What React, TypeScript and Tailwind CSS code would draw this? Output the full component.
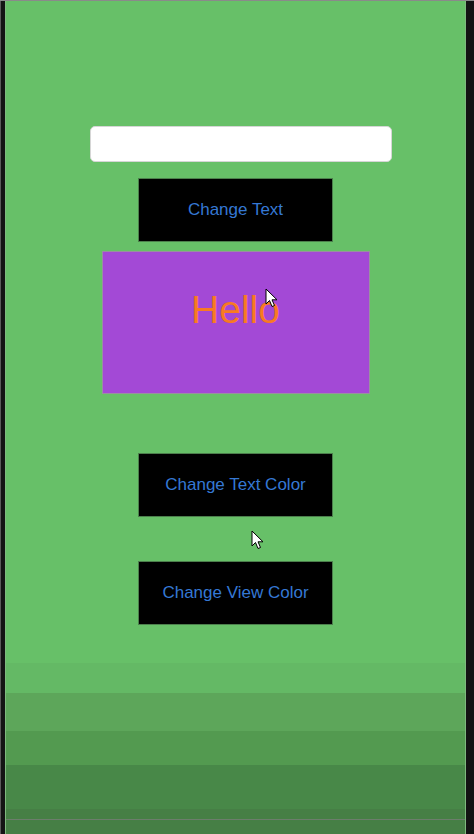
import React from "react";

function Cursor() {
  return (
    <svg width="14" height="20" viewBox="0 0 14 20">
      <path
        d="M1 1 L1 16 L4.5 12.5 L7 18.5 L9.5 17.5 L7 11.8 L12 11.8 Z"
        fill="#fff"
        stroke="#000"
        strokeWidth="1"
        strokeLinejoin="round"
      />
    </svg>
  );
}

function BlackButton({ label, className = "" }: { label: string; className?: string }) {
  return (
    <button
      className={`w-[195px] h-16 bg-black border border-[#4c7f4c] text-[17px] text-[#3578d4] flex items-center justify-center ${className}`}
    >
      {label}
    </button>
  );
}

export default function App() {
  return (
    <div
      className="relative w-[474px] h-[834px] overflow-hidden bg-[#131313] flex border-t border-[#8a8a8a]"
      style={{ fontFamily: '"Liberation Sans", Arial, sans-serif' }}
    >
      <div className="w-px bg-[#5a5a5a]" />
      <div className="w-[4px] bg-[#141414]" />
      <main className="w-[461px] flex flex-col border-l border-r border-[#7fb97f]">
        <section className="h-[640px] bg-[#67c068] flex flex-col items-center pt-[125px]">
          {/* text field */}
          <div className="self-start ml-[84px] w-[302px] h-9 bg-white rounded-[5px] border border-[#d6d6d6]" />

          <BlackButton label="Change Text" className="mt-4" />

          {/* coloured view */}
          <div className="mt-[9px] w-[268px] h-[143px] bg-[#a349d6] border border-[#9a8fa0] flex justify-center pt-[38px]">
            <span className="text-[39px] leading-none text-[#f87a22]">Hello</span>
          </div>

          <BlackButton label="Change Text Color" className="mt-[59px]" />
          <BlackButton label="Change View Color" className="mt-[44px]" />
        </section>

        <div className="h-[22px] bg-[#67c068]" />
        <div className="h-[30px] bg-[#64b965]" />
        <div className="h-[38px] bg-[#5da65a]" />
        <div className="h-[34px] bg-[#539a50]" />
        <div className="h-[44px] bg-[#488848]" />
        <div className="h-[10px] bg-[#467f45]" />
        <div className="h-px bg-[#6c7d6c]" />
        <div className="flex-1 bg-[#467f45]" />
      </main>
      <div className="flex-1 bg-[#131313]" />

      <div className="absolute left-[265px] top-[287px]">
        <Cursor />
      </div>
      <div className="absolute left-[251px] top-[529px]">
        <Cursor />
      </div>
    </div>
  );
}
